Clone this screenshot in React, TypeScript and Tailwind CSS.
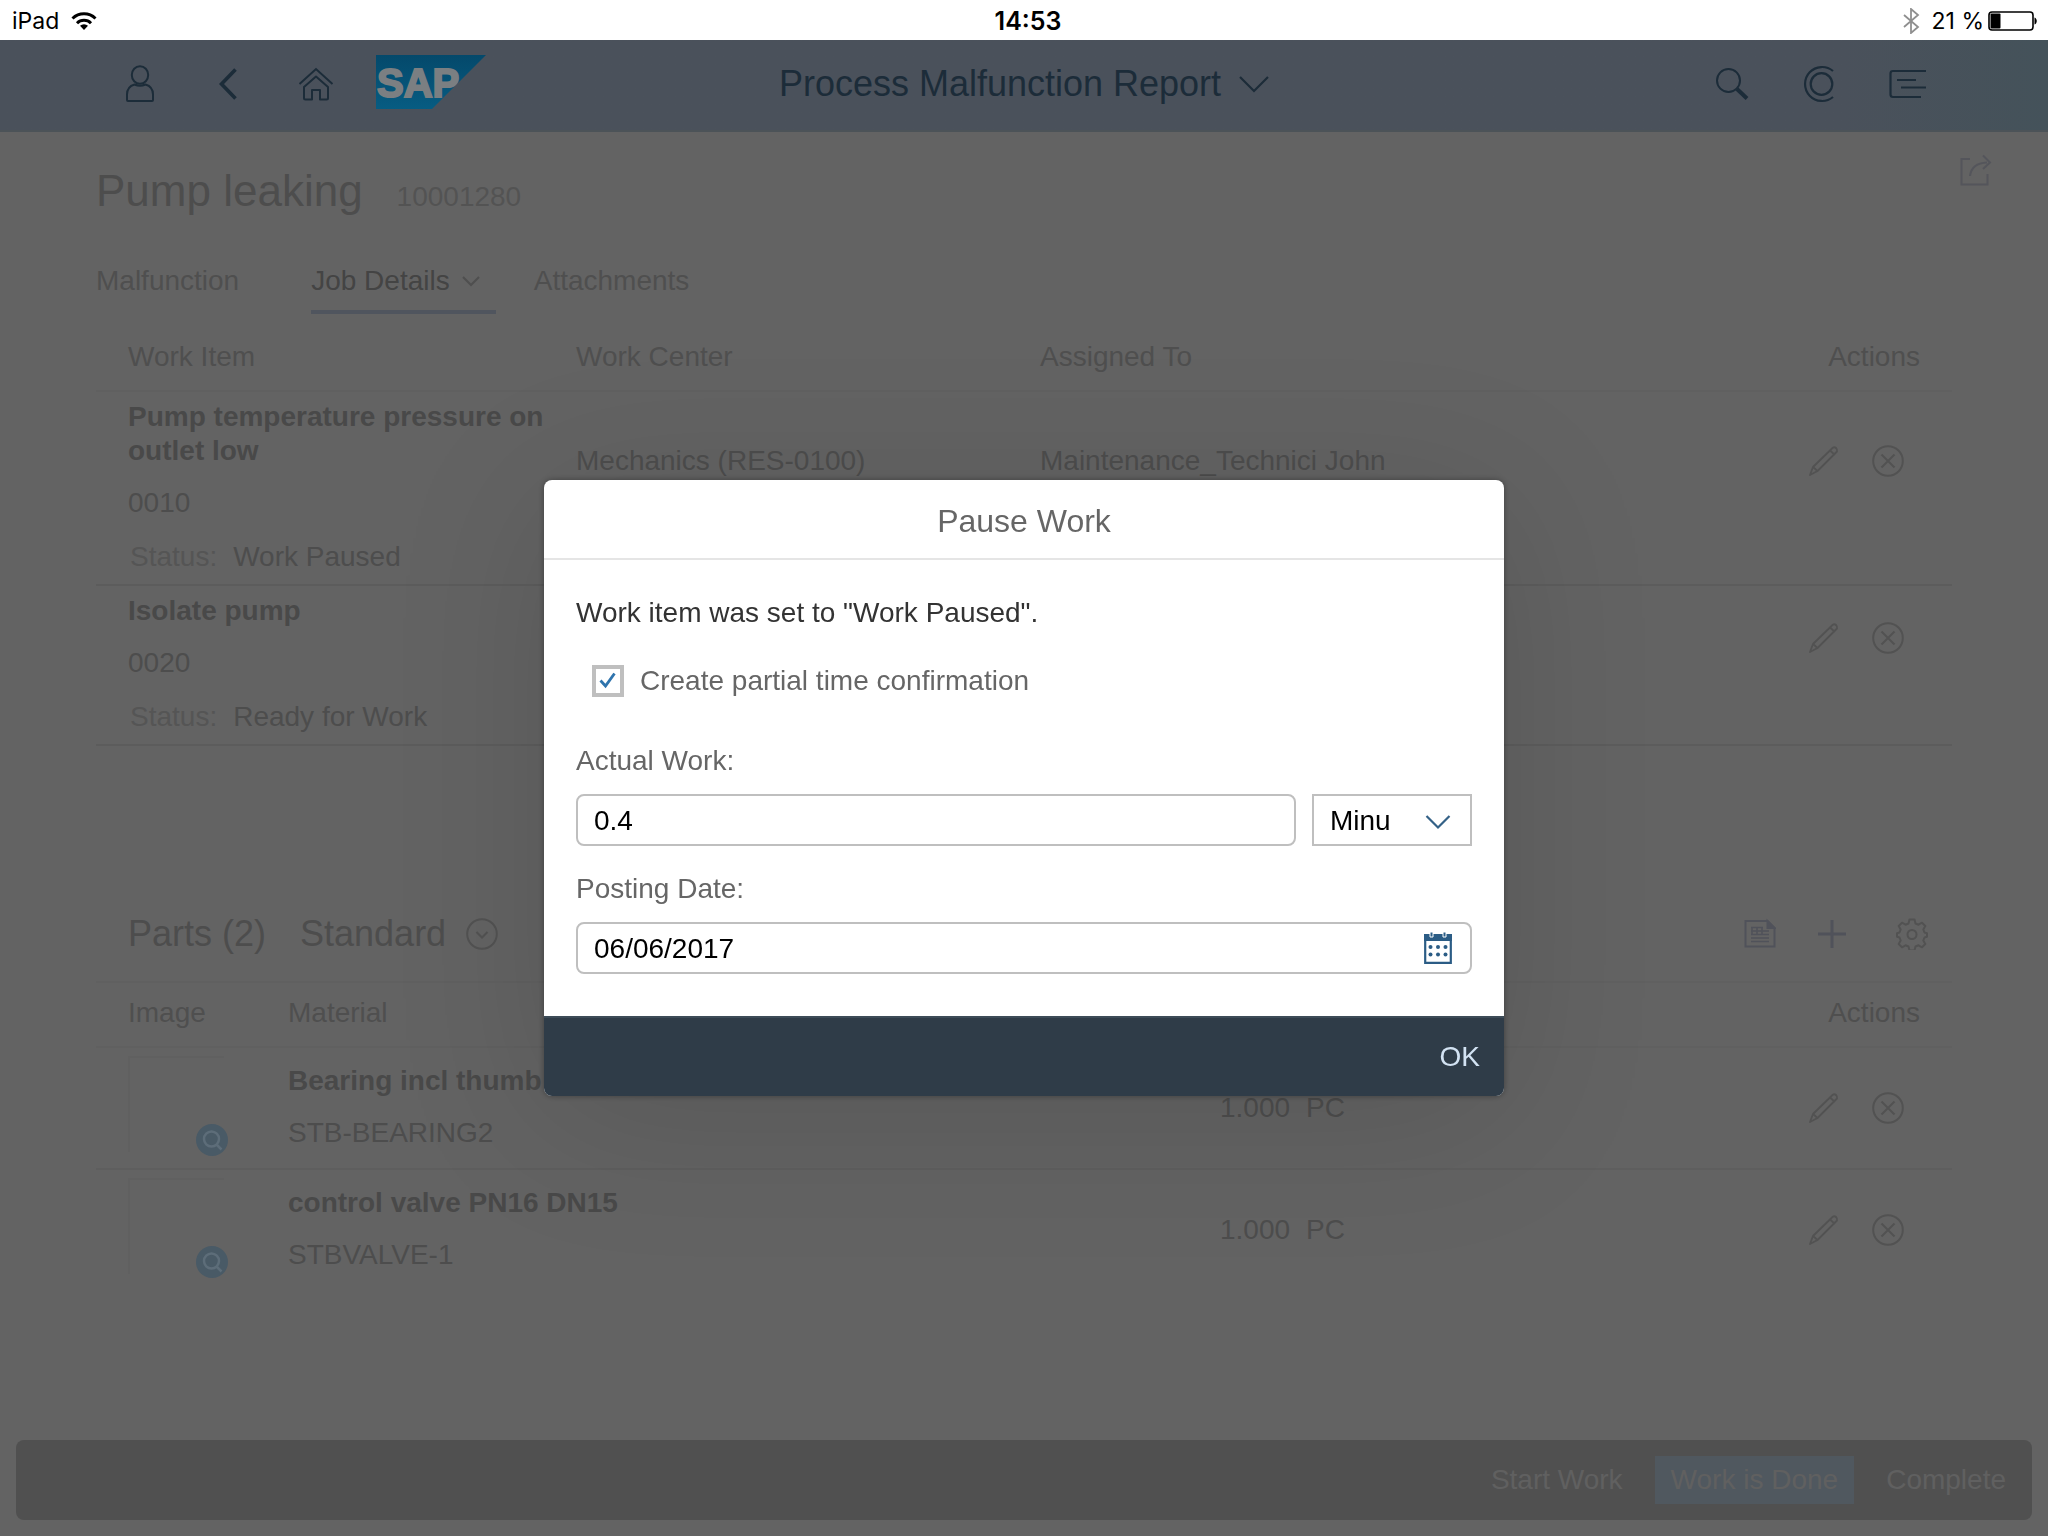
import { useState } from 'react'
import type { ReactNode } from 'react'

interface WorkItem {
  name: string
  id: string
  status: string
  workCenter?: string
  assignedTo?: string
}

interface Part {
  name: string
  code: string
  quantity: string
  unit: string
}

const workItems: WorkItem[] = [
  {
    name: 'Pump temperature pressure on outlet low',
    id: '0010',
    status: 'Work Paused',
    workCenter: 'Mechanics (RES-0100)',
    assignedTo: 'Maintenance_Technici John',
  },
  { name: 'Isolate pump', id: '0020', status: 'Ready for Work' },
]

const parts: Part[] = [
  { name: 'Bearing incl thumb', code: 'STB-BEARING2', quantity: '1.000', unit: 'PC' },
  { name: 'control valve PN16 DN15', code: 'STBVALVE-1', quantity: '1.000', unit: 'PC' },
]

function StatusBar() {
  return (
    <div className="grid h-10 grid-cols-3 items-center bg-white px-3 pt-0.5 font-['Inter',sans-serif] text-[23px] leading-[38px] text-black">
      <div className="flex items-center gap-3">
        <span>iPad</span>
        <svg width="26" height="20" viewBox="0 0 26 20" fill="none" stroke="#000" strokeWidth="3">
          <path d="M1.5 7.5a16.5 16.5 0 0 1 23 0" />
          <path d="M6 12.2a10 10 0 0 1 14 0" />
          <path d="M13 19l-4-4.2a6 6 0 0 1 8 0z" fill="#000" stroke="none" />
        </svg>
      </div>
      <span className="pl-2 text-center text-[25px] font-semibold">14:53</span>
      <div className="-mr-0.5 flex items-center justify-end gap-1">
        <svg className="mr-2" width="18" height="26" viewBox="0 0 18 26" fill="none" stroke="#8f8f8f" strokeWidth="1.8">
          <path d="M2 7l14 12-7 6V1l7 6L2 19" />
        </svg>
        <span>21 %</span>
        <svg width="50" height="20" viewBox="0 0 50 20">
          <rect x="1" y="1" width="44" height="18" rx="3" fill="none" stroke="#000" strokeWidth="1.6" />
          <rect x="2.5" y="2.5" width="10" height="15" rx="1" fill="#000" />
          <path d="M46.5 6.5c3 1 3 6 0 7z" fill="#000" />
        </svg>
      </div>
    </div>
  )
}

function ShellButton({ label, children }: { label: string; children: ReactNode }) {
  return (
    <button aria-label={label} className="flex h-full w-[88px] items-center justify-center">
      {children}
    </button>
  )
}

function SapLogo() {
  return (
    <svg className="ml-4" width="110" height="58" viewBox="0 0 110 58" role="img" aria-label="SAP">
      <defs>
        <linearGradient id="sap-blue" x1="0" y1="0" x2="0" y2="1">
          <stop offset="0" stopColor="#04496b" />
          <stop offset="1" stopColor="#075c82" />
        </linearGradient>
      </defs>
      <path d="M0 0h110L56 54H0z" fill="url(#sap-blue)" />
      <text
        x="1"
        y="42"
        fill="#7b7f82"
        stroke="#7b7f82"
        strokeWidth="2"
        fontSize="40"
        fontWeight="bold"
        fontFamily="Liberation Sans, Arial, sans-serif"
      >
        SAP
      </text>
    </svg>
  )
}

function ShellHeader() {
  return (
    <header className="grid h-[92px] grid-cols-[1fr_auto_1fr] items-center border-b-2 border-[#4c5358] bg-linear-to-r from-[#4a515b] from-90% to-[#44525a] px-24 pb-0.5 text-[#1c2c39]">
      <div className="flex h-full items-center">
        <ShellButton label="User">
          <svg width="30" height="38" viewBox="0 0 30 38" fill="none" stroke="currentColor" strokeWidth="2">
            <ellipse cx="15" cy="10" rx="8.2" ry="8.8" />
            <path d="M9.5 19.5c-5 1.5-7.5 5-7.5 10V35q0 1 1 1h24q1 0 1-1v-5.5c0-5-2.5-8.5-7.5-10-3.5 1.6-7.5 1.6-11 0z" />
          </svg>
        </ShellButton>
        <ShellButton label="Back">
          <svg width="20" height="32" viewBox="0 0 20 32" fill="none" stroke="currentColor" strokeWidth="3.6">
            <path d="M17.5 1.5L3.5 16l14 14.5" />
          </svg>
        </ShellButton>
        <ShellButton label="Home">
          <svg width="36" height="34" viewBox="0 0 36 34" fill="none" stroke="currentColor" strokeWidth="2">
            <path d="M1.5 17L18 2l16.5 15" />
            <path d="M6 20v11q0 1.5 1.5 1.5H14V23h8v9.5h6.5q1.5 0 1.5-1.5V20L18 9.5z" strokeLinejoin="round" />
          </svg>
        </ShellButton>
        <SapLogo />
      </div>
      <button className="flex items-center gap-[18px] text-[36px] leading-[44px]">
        Process Malfunction Report
        <svg width="30" height="18" viewBox="0 0 30 18" fill="none" stroke="currentColor" strokeWidth="2.2">
          <path d="M1 2l14 14L29 2" />
        </svg>
      </button>
      <div className="flex h-full items-center justify-end">
        <ShellButton label="Search">
          <svg width="34" height="34" viewBox="0 0 34 34" fill="none" stroke="currentColor" strokeWidth="2">
            <circle cx="13.5" cy="13.5" r="11.5" />
            <path d="M22 22l10 9.5" strokeWidth="4" />
          </svg>
        </ShellButton>
        <ShellButton label="CoPilot">
          <svg width="36" height="38" viewBox="0 0 36 38" fill="none" stroke="currentColor" strokeWidth="2.2">
            <circle cx="19.5" cy="19" r="10.8" />
            <path d="M31 6A17 17 0 1 0 31 32" />
          </svg>
        </ShellButton>
        <ShellButton label="Notifications">
          <svg width="38" height="30" viewBox="0 0 38 30" fill="none" stroke="currentColor" strokeWidth="2.2">
            <path d="M37 2H4Q1.5 2 1.5 4.5v21Q1.5 28 4 28h28M8 11h19M12 18.5h25" />
          </svg>
        </ShellButton>
      </div>
    </header>
  )
}

function RowActions() {
  return (
    <div className="flex items-center justify-end gap-8 text-[#525252]">
      <button aria-label="Edit">
        <svg width="32" height="32" viewBox="0 0 32 32" fill="none" stroke="currentColor" strokeWidth="1.8" strokeLinejoin="round">
          <path d="M2 30l3-8L24.5 3q2-1.5 3.5 0t1 3.5L9.5 26zM5 22l4.5 4M22 5.5l5 4.5" />
        </svg>
      </button>
      <button aria-label="Remove">
        <svg width="32" height="32" viewBox="0 0 32 32" fill="none" stroke="currentColor" strokeWidth="2">
          <circle cx="16" cy="16" r="14.8" />
          <path d="M9.5 9.5l13 13M22.5 9.5l-13 13" />
        </svg>
      </button>
    </div>
  )
}

function WorkItemsTable() {
  return (
    <table className="w-full table-fixed border-collapse text-left">
      <thead>
        <tr className="h-[67px] border-b-2 border-[#606060] text-[#4f4f4f]">
          <th className="w-1/4 pl-8 font-normal">Work Item</th>
          <th className="w-1/4 pl-4 font-normal">Work Center</th>
          <th className="pl-4 font-normal">Assigned To</th>
          <th className="w-1/4 pr-8 text-right font-normal">Actions</th>
        </tr>
      </thead>
      {workItems.map((item) => (
        <tbody key={item.id} className="border-b-2 border-[#5c5c5c]">
          <tr>
            <td className="pt-2 pr-4 pb-3.5 pl-8">
              <div className="font-bold text-[#494949]">{item.name}</div>
              <div className="mt-[18px]">{item.id}</div>
            </td>
            <td className="pt-2 pb-3 pl-4">{item.workCenter}</td>
            <td className="pt-2 pb-3 pl-4">{item.assignedTo}</td>
            <td className="pt-2 pr-12 pb-3">
              <RowActions />
            </td>
          </tr>
          <tr>
            <td colSpan={4} className="pt-1.5 pb-2.5 pl-[34px]">
              <span className="mr-4 text-[#555]">Status:</span>
              {item.status}
            </td>
          </tr>
        </tbody>
      ))}
    </table>
  )
}

function PartsTable() {
  return (
    <table className="w-full table-fixed border-collapse text-left">
      <thead>
        <tr className="h-16 border-b-2 border-[#606060] text-[#4f4f4f]">
          <th className="w-44 pb-1 pl-8 font-normal">Image</th>
          <th className="w-1/2 pb-1 pl-4 font-normal">Material</th>
          <th aria-label="Quantity" />
          <th className="pr-8 pb-1 text-right font-normal">Actions</th>
        </tr>
      </thead>
      <tbody>
        {parts.map((part) => (
          <tr key={part.code} className="border-b-2 border-[#5e5e5e] last:border-b-0">
            <td className="pt-2 pl-8 align-top">
              <div className="relative size-24 border-t-2 border-l-2 border-[#606060]">
                <button aria-label="Zoom image" className="absolute -right-1 -bottom-1 rounded-full bg-[#495a66] text-[#5d6d79]">
                  <svg width="32" height="32" viewBox="0 0 32 32" fill="none" stroke="currentColor" strokeWidth="2.5">
                    <circle cx="15.5" cy="15" r="7.5" />
                    <path d="M20.5 20.5l5 5" />
                  </svg>
                </button>
              </div>
            </td>
            <td className="pt-4 pb-[18px] pl-4">
              <div className="font-bold text-[#494949]">{part.name}</div>
              <div className="mt-[18px]">{part.code}</div>
            </td>
            <td className="pl-5">
              <span className="mr-4">{part.quantity}</span>
              {part.unit}
            </td>
            <td className="pr-12">
              <RowActions />
            </td>
          </tr>
        ))}
      </tbody>
    </table>
  )
}

function PartsToolbar() {
  return (
    <div className="flex h-24 items-center border-b-2 border-[#606060] pr-6 pl-8 text-[36px] leading-[44px]">
      <h2>Parts (2)</h2>
      <button className="ml-[34px] flex items-center gap-5">
        Standard
        <svg width="32" height="32" viewBox="0 0 32 32" fill="none" stroke="#525252" strokeWidth="2">
          <circle cx="16" cy="16" r="14.8" />
          <path d="M10.5 14l5.5 5.5 5.5-5.5" />
        </svg>
      </button>
      <div className="ml-auto flex items-center gap-10 text-[#50525a]">
        <button aria-label="Parts catalog">
          <svg width="32" height="32" viewBox="0 0 32 32" fill="none" stroke="currentColor" strokeWidth="2">
            <path d="M1.5 3h22l7 7v18.5h-29z" />
            <path d="M23.5 3v7h7z" fill="currentColor" />
            <path d="M7 9.5h12M7 13h18M7 16.5h18M7 20h18M7 23.5h18M8 9v8M13 9v8M18 9v8" strokeWidth="1.5" />
          </svg>
        </button>
        <button aria-label="Add part" className="mr-2">
          <svg width="32" height="32" viewBox="0 0 32 32" fill="none" stroke="currentColor" strokeWidth="3">
            <path d="M16 2v28M2 16h28" />
          </svg>
        </button>
        <button aria-label="Settings">
          <svg width="32" height="32" viewBox="0 0 32 32" fill="none" stroke="#525252" strokeWidth="2" strokeLinejoin="round">
            <path d="M13.5 1.5h5l1 4 3 1.2 3.5-2 3.3 3.3-2 3.5 1.2 3 2.5.8v3.4l-2.5.8-1.2 3 2 3.5-3.3 3.3-3.5-2-3 1.2-1 4h-5l-1-4-3-1.2-3.5 2L2.7 26l2-3.5-1.2-3-2.5-.8v-3.4l2.5-.8 1.2-3-2-3.5L6 4.700l3.500 2 3-1.200z" />
            <circle cx="16" cy="16.5" r="4.5" />
          </svg>
        </button>
      </div>
    </div>
  )
}

function PauseWorkDialog() {
  const [confirmTime, setConfirmTime] = useState(true)
  const [actualWork, setActualWork] = useState('0.4')
  const [postingDate, setPostingDate] = useState('06/06/2017')

  return (
    <div className="fixed inset-x-0 top-10 bottom-0 flex items-center justify-center">
      <div
        role="dialog"
        aria-labelledby="pause-title"
        className="w-[960px] max-w-full overflow-hidden rounded-lg bg-white text-[#666] shadow-[0_0_6px_rgba(0,0,0,0.35),0_20px_160px_rgba(0,0,0,0.12)]"
      >
        <h2 id="pause-title" className="h-20 border-b-2 border-[#e5e5e5] pt-px text-center text-[32px] leading-[80px]">
          Pause Work
        </h2>
        <div className="px-8 pt-9 pb-[42px]">
          <p className="text-[#333]">Work item was set to "Work Paused".</p>

          <label className="mt-[34px] ml-4 flex items-center gap-4">
            <span className="relative flex">
              <input
                type="checkbox"
                checked={confirmTime}
                onChange={(e) => setConfirmTime(e.target.checked)}
                className="size-8 appearance-none border-4 border-[#bfbfbf] bg-white"
              />
              {confirmTime && (
                <svg className="pointer-events-none absolute inset-0" width="32" height="32" viewBox="0 0 32 32" fill="none" stroke="#2f74ad" strokeWidth="2.8">
                  <path d="M8.5 15.5l5 5.5L22.5 8.5" />
                </svg>
              )}
            </span>
            Create partial time confirmation
          </label>

          <label htmlFor="actual-work" className="mt-[46px] block">
            Actual Work:
          </label>
          <div className="mt-4 flex gap-4 text-black">
            <input
              id="actual-work"
              value={actualWork}
              onChange={(e) => setActualWork(e.target.value)}
              className="h-[52px] min-w-0 flex-1 rounded-lg border-2 border-[#bfbfbf] px-4 pt-0.5"
            />
            <div className="relative w-40">
              <select aria-label="Unit" className="h-[52px] w-full appearance-none border-2 border-[#bfbfbf] bg-white px-4 pt-0.5">
                <option>Minu</option>
              </select>
              <svg className="pointer-events-none absolute top-5 right-[21px]" width="26" height="16" viewBox="0 0 26 16" fill="none" stroke="#346187" strokeWidth="2.2">
                <path d="M1.5 2L13 13.5 24.5 2" />
              </svg>
            </div>
          </div>

          <label htmlFor="posting-date" className="mt-[26px] block">
            Posting Date:
          </label>
          <div className="relative mt-4 text-black">
            <input
              id="posting-date"
              value={postingDate}
              onChange={(e) => setPostingDate(e.target.value)}
              className="h-[52px] w-full rounded-lg border-2 border-[#bfbfbf] px-4 pt-0.5"
            />
            <button aria-label="Open calendar" className="absolute top-2.5 right-5">
              <svg width="28" height="32" viewBox="0 0 28 32" fill="#2b5c85">
                <path d="M1.2 3h25.6v27.8H1.2z" fill="none" stroke="#2b5c85" strokeWidth="2.2" />
                <path d="M0 2h28v7H0z" />
                <path d="M6 0h3v5H6zM19 0h3v5h-3z" stroke="#fff" strokeWidth="1" />
                <circle cx="6.5" cy="15" r="2" />
                <circle cx="14" cy="15" r="2" />
                <circle cx="21.5" cy="15" r="2" />
                <circle cx="6.5" cy="22.5" r="2" />
                <circle cx="14" cy="22.5" r="2" />
                <circle cx="21.5" cy="22.5" r="2" />
              </svg>
            </button>
          </div>
        </div>
        <div className="flex h-20 items-center justify-end border-t-2 border-[#3d4c58] bg-[#2f3c48] px-2">
          <button className="h-16 px-4 text-[#d3e3f3]">OK</button>
        </div>
      </div>
    </div>
  )
}

export default function App() {
  return (
    <div className="flex min-h-screen flex-col bg-[#636363] font-['Liberation_Sans',Arial,sans-serif] text-[28px] leading-[34px] text-[#4d4d4d]">
      <StatusBar />
      <ShellHeader />

      <main className="flex-1 px-24">
        <div className="-mr-10 flex items-start justify-between pt-5">
          <div className="flex items-baseline gap-[34px] pt-[11px]">
            <h1 className="text-[44px] leading-[56px]">Pump leaking</h1>
            <span className="text-[#535353]">10001280</span>
          </div>
          <button aria-label="Share" className="text-[#54555b]">
            <svg width="32" height="34" viewBox="0 0 32 34" fill="none" stroke="currentColor" strokeWidth="2">
              <path d="M10 7H1.5v25.5h26V22M10 24c1-8 6-13 17-13.5M23 3.5l7 7-7 6.5" />
            </svg>
          </button>
        </div>

        <nav className="mt-[31px] flex gap-[38px]">
          <button className="mr-[34px] h-16 border-b-4 border-transparent pt-0.5 text-[#4f4f4f]">Malfunction</button>
          <button className="flex h-16 items-center gap-3 border-b-4 border-[#50555e] pt-0.5 pr-4 text-[#444]">
            Job Details
            <svg width="18" height="12" viewBox="0 0 18 12" fill="none" stroke="#4f4f4f" strokeWidth="2">
              <path d="M1 2l8 8 8-8" />
            </svg>
          </button>
          <button className="h-16 border-b-4 border-transparent pt-0.5 text-[#4f4f4f]">Attachments</button>
        </nav>

        <section className="mt-2.5">
          <WorkItemsTable />
        </section>

        <section className="mt-[141px]">
          <PartsToolbar />
          <PartsTable />
        </section>
      </main>

      <footer className="m-4 flex h-20 items-center justify-end gap-4 rounded-lg bg-[#505050] pr-2.5 text-[#606060]">
        <button className="h-12 px-4">Start Work</button>
        <button className="h-12 bg-[#50585f] px-4">Work is Done</button>
        <button className="h-12 px-4">Complete</button>
      </footer>

      <PauseWorkDialog />
    </div>
  )
}
